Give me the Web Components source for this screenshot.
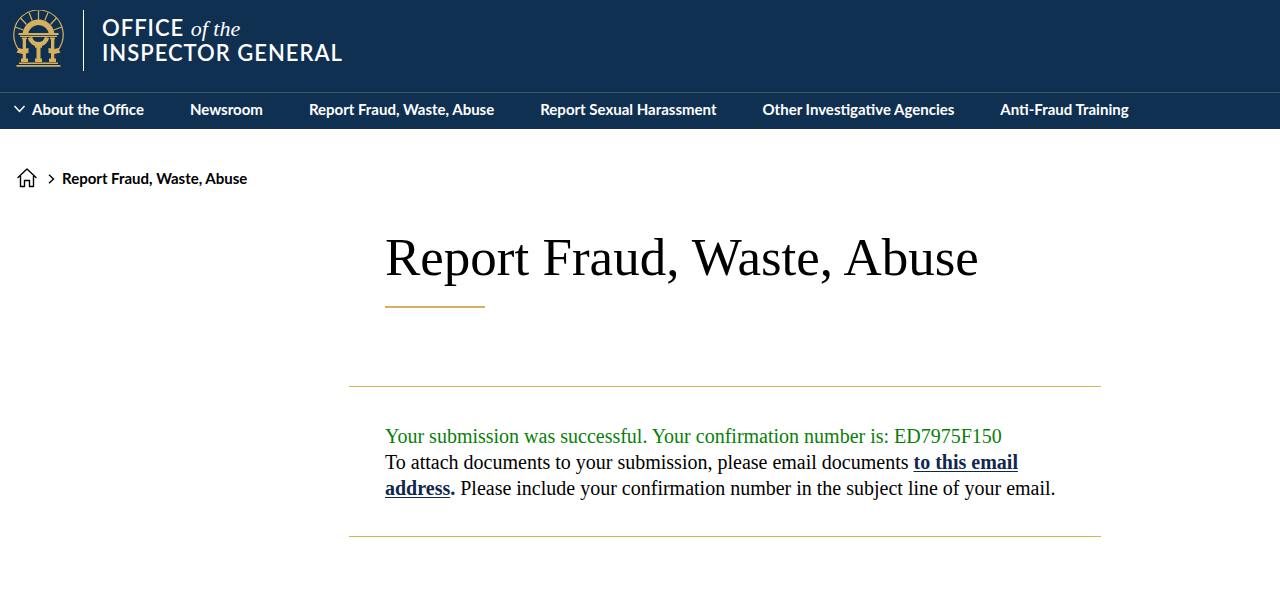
<!DOCTYPE html>
<html lang="en">
<head>
<meta charset="utf-8">
<meta name="viewport" content="width=device-width, initial-scale=1">
<title>Report Fraud, Waste, Abuse</title>
<style>
  :root {
    --navy: #103052;
    --gold: #d6b05c;
    --sans: Lato, "Open Sans", sans-serif;
    --serif: "Liberation Serif", "Times New Roman", serif;
  }
  body {
    margin: 0;
    background: #fff;
    color: #000;
    font-family: var(--sans);
  }
</style>
</head>
<body>
<site-header>
  <site-brand slot="brand"></site-brand>
  <nav-item expandable>About the Office</nav-item>
  <nav-item>Newsroom</nav-item>
  <nav-item>Report Fraud, Waste, Abuse</nav-item>
  <nav-item>Report Sexual Harassment</nav-item>
  <nav-item>Other Investigative Agencies</nav-item>
  <nav-item>Anti-Fraud Training</nav-item>
</site-header>
<bread-crumb>Report Fraud, Waste, Abuse</bread-crumb>
<page-content>
  <span slot="title">Report Fraud, Waste, Abuse</span>
  <confirmation-message code="ED7975F150"></confirmation-message>
</page-content>

<script>
class SiteHeader extends HTMLElement {
  constructor() {
    super();
    this.attachShadow({ mode: 'open' });
    this.shadowRoot.innerHTML = `
      <style>
        :host {
          display: block;
          background: var(--navy);
          color: #fff;
        }
        .brand {
          padding: 10px 13px 21px;
        }
        nav {
          display: flex;
          flex-wrap: wrap;
          column-gap: 46px;
          padding: 6px 13px 10px;
          border-top: 1px solid #3b5868;
        }
      </style>
      <header>
        <div class="brand"><slot name="brand"></slot></div>
        <nav aria-label="Main"><slot></slot></nav>
      </header>
    `;
  }
}

class SiteBrand extends HTMLElement {
  constructor() {
    super();
    this.attachShadow({ mode: 'open' });
    this.shadowRoot.innerHTML = `
      <style>
        :host { display: block; }
        a {
          display: flex;
          width: fit-content;
          color: inherit;
          text-decoration: none;
        }
        svg {
          width: 51px;
          height: 57px;
        }
        .name {
          margin-left: 19px;
          padding: 5px 0 6px 18px;
          border-left: 1px solid #fff;
          font-size: 22px;
          line-height: 25px;
          font-weight: 600;
          letter-spacing: 1px;
        }
        .name span { display: block; }
        em {
          font-family: var(--serif);
          font-weight: 400;
          line-height: 20px;
          letter-spacing: 0;
        }
      </style>
      <a href="#">
        <svg viewBox="0 0 51 57" fill="none" stroke="#d6b05c" aria-hidden="true">
          <path d="M5 38.500A24.700 24.700 0 1 1 46 38.500" stroke-width="1.2"/>
          <path d="M25.500 1v9M16 2.500l3.200 8M35 2.500l-3.200 8M7.500 8l6 6.500M43.500 8l-6 6.500M2 17l8.500 3M49 17l-8.500 3" stroke-width="1.2"/>
          <path d="M12.300 24a13.300 13.300 0 0 1 26.400 0" stroke-width="5.500"/>
          <path d="M17 27.500a8.700 8.700 0 0 0 17 0" stroke-width="4.500"/>
          <g fill="#d6b05c" stroke="none">
            <path d="M5.500 23h40v2h-40zM7 25.700h37V27H7z"/>
            <path d="M9 27.500h5v1.800h-1V49h-3.300V29.300H9zM37 27.500h5v1.800h-.700V49H38V29.300h-1zM22 36h7v1.800h-1.500V49h-4V37.800H22z"/>
            <path d="M8 48.500h7V52H8zM22 48.500h7V52h-7zM36 48.500h7V52h-7z"/>
            <path d="M6 52.500h39V54H6zM3.500 55h44v1.700h-44z"/>
            <path d="M3.500 37.500l6 1.500 6-1v5l-6 1-6-1.500 1.500-2.500zM47.500 37.500l-6 1.500-6-1v5l6 1 6-1.500-1.500-2.500z"/>
          </g>
        </svg>
        <div class="name">
          <span>OFFICE <em>of the</em></span>
          <span>INSPECTOR GENERAL</span>
        </div>
      </a>
    `;
  }
}

class NavItem extends HTMLElement {
  constructor() {
    super();
    this.attachShadow({ mode: 'open' });
    this.shadowRoot.innerHTML = `
      <style>
        :host { display: block; }
        a, button {
          display: flex;
          align-items: center;
          gap: 6px;
          padding: 0;
          border: 0;
          background: none;
          color: inherit;
          font: 700 15px/20px var(--sans);
          text-decoration: none;
          white-space: nowrap;
          cursor: pointer;
        }
        svg {
          width: 13px;
          height: 8px;
        }
      </style>
      ${this.hasAttribute('expandable') ? `
        <button type="button" aria-expanded="false">
          <svg viewBox="0 0 13 8" fill="none" stroke="currentColor" stroke-width="1.500" aria-hidden="true">
            <path d="M1.500 1l5 5.500 5-5.500"/>
          </svg>
          <slot></slot>
        </button>` : '<a href="#"><slot></slot></a>'}
    `;
  }
}

class BreadCrumb extends HTMLElement {
  constructor() {
    super();
    this.attachShadow({ mode: 'open' });
    this.shadowRoot.innerHTML = `
      <style>
        :host {
          display: block;
          padding: 38px 17px 0;
        }
        nav {
          display: flex;
          align-items: center;
          font: 700 15px/22px var(--sans);
        }
        a { display: flex; color: inherit; }
        .home { width: 20px; height: 20px; }
        .sep {
          width: 7px;
          height: 10px;
          margin: 2px 7px 0 11px;
        }
      </style>
      <nav aria-label="Breadcrumb">
        <a href="#" aria-label="Home">
          <svg class="home" viewBox="0 0 20 20" fill="none" stroke="currentColor" stroke-width="1.400" stroke-linejoin="round" stroke-linecap="round">
            <path d="M1 9.500L10 1l9 8.500M3.500 8v10.500h4v-6h5v6h4V8"/>
          </svg>
        </a>
        <svg class="sep" viewBox="0 0 7 10" fill="none" stroke="currentColor" stroke-width="1.400" aria-hidden="true">
          <path d="M1 .8L5.500 5 1 9.200"/>
        </svg>
        <span><slot></slot></span>
      </nav>
    `;
  }
}

class PageContent extends HTMLElement {
  constructor() {
    super();
    this.attachShadow({ mode: 'open' });
    this.shadowRoot.innerHTML = `
      <style>
        :host {
          display: grid;
          grid-template-columns: 349fr 752fr 179fr;
          font-family: var(--serif);
        }
        main {
          grid-column: 2;
          min-width: 0;
          padding-top: 36px;
        }
        h1 {
          margin: 0 36px 78px;
          font-size: 53px;
          line-height: 64px;
          font-weight: 400;
        }
        h1::after {
          content: "";
          display: block;
          width: 100px;
          height: 2px;
          margin-top: 17px;
          background: var(--gold);
        }
      </style>
      <main>
        <h1><slot name="title"></slot></h1>
        <slot></slot>
      </main>
    `;
  }
}

class ConfirmationMessage extends HTMLElement {
  constructor() {
    super();
    this.attachShadow({ mode: 'open' });
    this.shadowRoot.innerHTML = `
      <style>
        :host {
          display: block;
          padding: 36px 36px 35px;
          border: solid var(--gold);
          border-width: 1px 0;
          font-size: 20px;
          line-height: 26px;
        }
        p { margin: 0; }
        .success { color: #078007; }
        a, b { color: #10284c; font-weight: 700; }
        a {
          text-decoration-thickness: 1px;
          text-underline-offset: 2px;
        }
      </style>
      <p class="success" role="status">Your submission was successful. Your confirmation number is: ${this.getAttribute('code')}</p>
      <p>To attach documents to your submission, please email documents <a href="#">to this email address</a><b>.</b> Please include your confirmation number in the subject line of your email.</p>
    `;
  }
}

customElements.define('site-header', SiteHeader);
customElements.define('site-brand', SiteBrand);
customElements.define('nav-item', NavItem);
customElements.define('bread-crumb', BreadCrumb);
customElements.define('page-content', PageContent);
customElements.define('confirmation-message', ConfirmationMessage);
</script>
</body>
</html>
